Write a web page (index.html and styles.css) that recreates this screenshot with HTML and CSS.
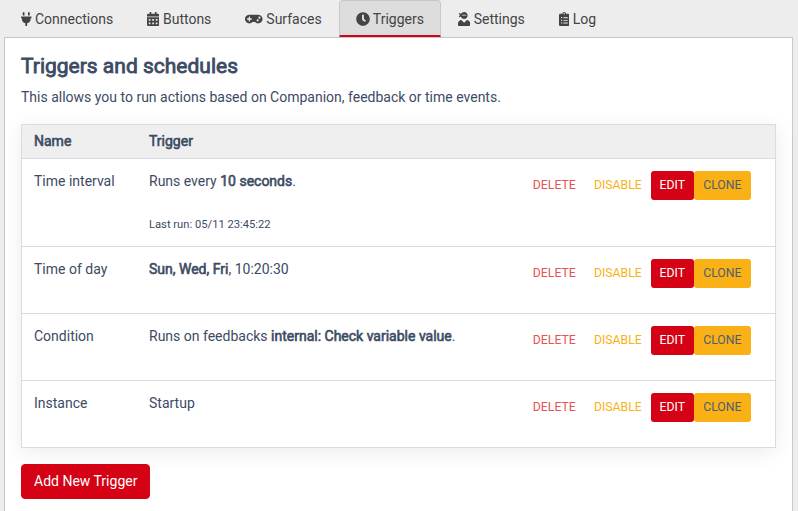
FILE: index.html
```html
<!DOCTYPE html>
<html lang="en">
<head>
<meta charset="utf-8">
<title>Triggers and schedules</title>
<link rel="stylesheet" href="styles.css">
</head>
<body>
<nav class="tabs">
  <a class="tab"><svg class="icon" viewBox="0 0 384 512"><path d="M320 32a32 32 0 0 0-64 0v96h64zm48 128H16A16 16 0 0 0 0 176v32a16 16 0 0 0 16 16h16v32a160 160 0 0 0 128 156.800V512h64v-99.200A160 160 0 0 0 352 256v-32h16a16 16 0 0 0 16-16v-32a16 16 0 0 0-16-16zM128 32a32 32 0 0 0-64 0v96h64z"/></svg> Connections</a>
  <a class="tab"><svg class="icon" viewBox="0 0 448 512"><path d="M0 464c0 26.500 21.500 48 48 48h352c26.500 0 48-21.500 48-48V192H0v272zm320-196c0-6.600 5.400-12 12-12h40c6.600 0 12 5.400 12 12v40c0 6.600-5.400 12-12 12h-40c-6.600 0-12-5.400-12-12v-40zm0 128c0-6.600 5.400-12 12-12h40c6.600 0 12 5.400 12 12v40c0 6.600-5.400 12-12 12h-40c-6.600 0-12-5.400-12-12v-40zM192 268c0-6.600 5.400-12 12-12h40c6.600 0 12 5.400 12 12v40c0 6.600-5.400 12-12 12h-40c-6.600 0-12-5.400-12-12v-40zm0 128c0-6.600 5.400-12 12-12h40c6.600 0 12 5.400 12 12v40c0 6.600-5.400 12-12 12h-40c-6.600 0-12-5.400-12-12v-40zM64 268c0-6.600 5.400-12 12-12h40c6.600 0 12 5.400 12 12v40c0 6.600-5.400 12-12 12H76c-6.600 0-12-5.400-12-12v-40zm0 128c0-6.600 5.400-12 12-12h40c6.600 0 12 5.400 12 12v40c0 6.600-5.400 12-12 12H76c-6.600 0-12-5.400-12-12v-40zM400 64h-48V16c0-8.800-7.200-16-16-16h-32c-8.800 0-16 7.200-16 16v48H160V16c0-8.800-7.200-16-16-16h-32c-8.800 0-16 7.200-16 16v48H48C21.500 64 0 85.500 0 112v48h448v-48c0-26.500-21.500-48-48-48z"/></svg> Buttons</a>
  <a class="tab"><svg class="icon" viewBox="0 0 640 512"><path d="M480 96H160a160 160 0 1 0 114.240 272h91.520A160 160 0 1 0 480 96zM248 268a12 12 0 0 1-12 12h-52v52a12 12 0 0 1-12 12h-24a12 12 0 0 1-12-12v-52H84a12 12 0 0 1-12-12v-24a12 12 0 0 1 12-12h52v-52a12 12 0 0 1 12-12h24a12 12 0 0 1 12 12v52h52a12 12 0 0 1 12 12zm216 76a40 40 0 1 1 40-40 40 40 0 0 1-40 40zm64-96a40 40 0 1 1 40-40 40 40 0 0 1-40 40z"/></svg> Surfaces</a>
  <a class="tab active"><svg class="icon" viewBox="0 0 512 512"><path d="M256 8C119 8 8 119 8 256s111 248 248 248 248-111 248-248S393 8 256 8zm57.100 350.100L224.900 294c-3.100-2.300-4.900-5.900-4.900-9.700V116c0-6.600 5.400-12 12-12h48c6.600 0 12 5.400 12 12v137.700l63.500 46.200c5.400 3.900 6.500 11.400 2.600 16.800l-28.200 38.800c-3.900 5.300-11.400 6.500-16.800 2.600z"/></svg> Triggers</a>
  <a class="tab"><svg class="icon" viewBox="0 0 448 512"><path d="M325.400 289.200L224 390.600 122.600 289.200C54 295.300 0 352.200 0 422.400V464c0 26.500 21.500 48 48 48h352c26.500 0 48-21.500 48-48v-41.600c0-70.200-54-127.100-122.600-133.200zM32 192c27.300 0 51.800-11.500 69.200-29.700 15.100 53.900 64 93.700 122.800 93.700 70.700 0 128-57.300 128-128S294.700 0 224 0c-50.400 0-93.600 29.400-114.500 71.800C92.100 47.800 64 32 32 32c0 33.400 17.100 62.800 43.100 80-26 17.200-43.100 46.600-43.100 80zm144-96h96c17.700 0 32 14.300 32 32H144c0-17.700 14.300-32 32-32z"/></svg> Settings</a>
  <a class="tab"><svg class="icon" viewBox="0 0 384 512"><path d="M336 64h-80c0-35.300-28.700-64-64-64s-64 28.700-64 64H48C21.500 64 0 85.500 0 112v352c0 26.500 21.500 48 48 48h288c26.500 0 48-21.500 48-48V112c0-26.500-21.500-48-48-48zM96 424c-13.300 0-24-10.700-24-24s10.700-24 24-24 24 10.700 24 24-10.700 24-24 24zm0-96c-13.300 0-24-10.700-24-24s10.700-24 24-24 24 10.700 24 24-10.700 24-24 24zm0-96c-13.300 0-24-10.700-24-24s10.700-24 24-24 24 10.700 24 24-10.700 24-24 24zm96-192c13.300 0 24 10.700 24 24s-10.700 24-24 24-24-10.700-24-24 10.700-24 24-24zm128 368c0 4.400-3.600 8-8 8H168c-4.400 0-8-3.600-8-8v-16c0-4.400 3.600-8 8-8h144c4.400 0 8 3.600 8 8v16zm0-96c0 4.400-3.600 8-8 8H168c-4.400 0-8-3.600-8-8v-16c0-4.400 3.600-8 8-8h144c4.400 0 8 3.600 8 8v16zm0-96c0 4.400-3.600 8-8 8H168c-4.400 0-8-3.600-8-8v-16c0-4.400 3.600-8 8-8h144c4.400 0 8 3.600 8 8v16z"/></svg> Log</a>
</nav>
<main class="panel">
  <h4 class="title">Triggers and schedules</h4>
  <p class="intro">This allows you to run actions based on Companion, feedback or time events.</p>
  <table class="triggers">
    <thead>
      <tr><th class="col-name">Name</th><th>Trigger</th><th class="col-actions"></th></tr>
    </thead>
    <tbody>
      <tr class="tall">
        <td>Time interval</td>
        <td>Runs every <b>10 seconds</b>.<small class="last-run">Last run: 05/11 23:45:22</small></td>
        <td><div class="actions"><button class="btn delete">DELETE</button><button class="btn disable">DISABLE</button><button class="btn edit">EDIT</button><button class="btn clone">CLONE</button></div></td>
      </tr>
      <tr>
        <td>Time of day</td>
        <td><b>Sun, Wed, Fri</b>, 10:20:30</td>
        <td><div class="actions"><button class="btn delete">DELETE</button><button class="btn disable">DISABLE</button><button class="btn edit">EDIT</button><button class="btn clone">CLONE</button></div></td>
      </tr>
      <tr>
        <td>Condition</td>
        <td>Runs on feedbacks <b>internal: Check variable value</b>.</td>
        <td><div class="actions"><button class="btn delete">DELETE</button><button class="btn disable">DISABLE</button><button class="btn edit">EDIT</button><button class="btn clone">CLONE</button></div></td>
      </tr>
      <tr>
        <td>Instance</td>
        <td>Startup</td>
        <td><div class="actions"><button class="btn delete">DELETE</button><button class="btn disable">DISABLE</button><button class="btn edit">EDIT</button><button class="btn clone">CLONE</button></div></td>
      </tr>
    </tbody>
  </table>
  <button class="add">Add New Trigger</button>
</main>
</body>
</html>
```
FILE: styles.css
```css
* { box-sizing: border-box; }
html { height: 100%; }
body {
  margin: 0;
  height: 100%;
  padding: 0 5px 0 4px;
  display: flex;
  flex-direction: column;
  background: #ededed;
  color: #3c4b64;
  font: 14px/21px Roboto, sans-serif;
}
.tabs { display: flex; flex: none; height: 37px; }
.tab {
  height: 37px;
  padding: 8px 16px 7px;
  border: 1px solid transparent;
  border-bottom: 0;
  white-space: nowrap;
  color: #444;
}
.tab.active {
  padding-bottom: 5px;
  background: #ddd;
  border-color: #c4c9d0;
  border-bottom: 2px solid #d50215;
  border-radius: 4px 4px 0 0;
}
.icon { height: 14px; width: auto; vertical-align: -2px; fill: currentColor; }
.panel {
  flex: 1;
  padding: 16px 16px 0;
  background: #fff;
  border: 1px solid #c4c9d0;
  border-bottom: 0;
}
.title { margin: 0 0 8px; font-size: 21px; line-height: 25px; font-weight: 400; -webkit-text-stroke: 0.8px; }
.intro { margin: 0 0 16px; }
b, th { font-weight: 400; -webkit-text-stroke: 0.6px; }
.triggers {
  width: 755px;
  table-layout: fixed;
  border-collapse: collapse;
  border: 1px solid #d8dbe0;
  box-shadow: 0 4px 20px rgba(0, 0, 0, .08);
}
th { height: 34px; padding: 6px 12px; text-align: left; background: #efefef; }
td { height: 67px; padding: 12px; vertical-align: top; border-top: 1px solid #d8dbe0; }
.tall td { height: 88px; padding-bottom: 10px; }
.col-name { width: 115.5px; }
.col-actions { width: 264px; }
.last-run { display: block; margin-top: 22px; font-size: 11.2px; }
.actions { display: flex; justify-content: flex-end; padding-right: 12.2px; }
.btn {
  height: 29px;
  padding: 3px 0 5px;
  border: 1px solid transparent;
  border-radius: 3px;
  background: transparent;
  font: 12.25px/18px Roboto, sans-serif;
}
.delete { width: 61px; color: #e55353; }
.disable { width: 66px; color: #f9b115; }
.edit { width: 43px; background: #d50215; color: #fff; }
.clone { width: 57px; background: #f9b115; color: #4f5d73; }
.add {
  display: block;
  height: 35px;
  margin-top: 16px;
  padding: 6px 12px;
  border: 1px solid #d50215;
  border-radius: 4px;
  background: #d50215;
  color: #fff;
  font: 14px/21px Roboto, sans-serif;
}
```
